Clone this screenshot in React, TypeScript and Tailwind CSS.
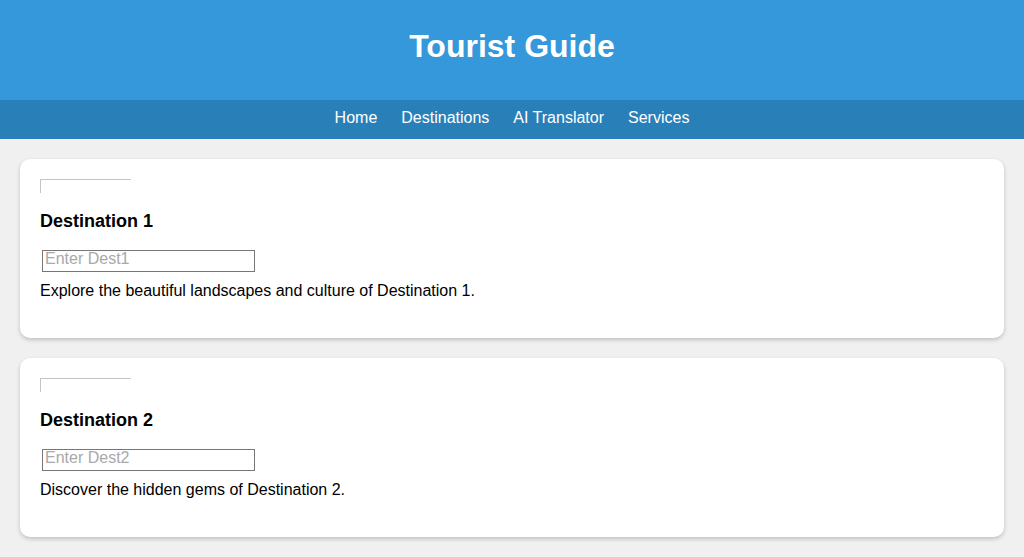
const destinations = [
  { id: 1, name: "Destination 1", placeholder: "Enter Dest1", text: "Explore the beautiful landscapes and culture of Destination 1." },
  { id: 2, name: "Destination 2", placeholder: "Enter Dest2", text: "Discover the hidden gems of Destination 2." },
];

const links = ["Home", "Destinations", "AI Translator", "Services"];

export default function App() {
  return (
    <div className="min-h-[557px] bg-[#f0f0f0] font-['Liberation_Sans',Arial,sans-serif] text-black">
      <header className="h-[100px] bg-[#3498db] pt-[28px] text-center">
        <h1 className="text-[32px] font-bold leading-[37px] text-white">Tourist Guide</h1>
      </header>

      <nav className="flex h-[39px] items-start justify-center gap-[24px] bg-[#2980b9] pt-[9px]">
        {links.map((l) => (
          <a key={l} href="#" className="text-[16px] leading-[18px] text-white">
            {l}
          </a>
        ))}
      </nav>

      <main className="flex flex-col gap-[20px] px-[20px] pt-[20px]">
        {destinations.map((d) => (
          <section key={d.id} className="rounded-[10px] bg-white px-[20px] pt-[20px] pb-[20px] shadow-[0_2px_4px_rgba(0,0,0,0.2)]">
            {/* broken image placeholder */}
            <div className="h-[14px] w-[91px] border-t border-l border-[#c4c4c4]" />
            <h3 className="mt-[18px] text-[18px] font-bold leading-[21px]">{d.name}</h3>
            <input
              type="text"
              placeholder={d.placeholder}
              className="ml-[2px] mt-[18px] block h-[22px] w-[213px] border border-[#767676] px-[2px] pt-0 pb-[5px] text-[16px] leading-[15px] placeholder:text-[#a9a9a9] outline-none"
            />
            <p className="mt-[10px] mb-[18px] text-[16px] leading-[18px]">{d.text}</p>
          </section>
        ))}
      </main>
    </div>
  );
}
